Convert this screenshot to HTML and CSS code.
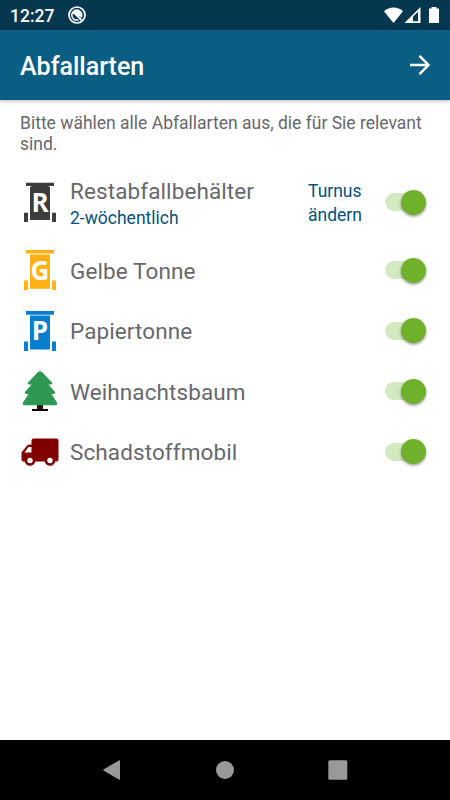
FILE: index.html
```html
<!DOCTYPE html>
<html lang="de">
<head>
    <meta charset="UTF-8">
    <meta name="viewport" content="width=device-width, initial-scale=1.0">
    <title>Abfallarten</title>
    <link rel="stylesheet" href="styles.css">
</head>
<body>
    <div class="status-bar">
        <span class="clock">12:27</span>
        <svg class="status-logo" width="18" height="18" viewBox="0 0 18 18">
            <circle cx="9" cy="9" r="8" fill="none" stroke="#fff" stroke-width="1.7"/>
            <path d="M13.2 11.5A5 5 0 1 0 10.5 13.8" fill="none" stroke="#fff" stroke-width="1.5"/>
            <path d="M5 8a4 4 0 0 1 8 0v3z" fill="#fff"/>
            <path d="M7 8l6.5 6" stroke="#fff" stroke-width="2"/>
            <path d="M5.5 8.5l5 4.5" stroke="#05384f" stroke-width="1"/>
        </svg>
        <svg class="status-icons" width="56" height="18" viewBox="0 0 56 18">
            <path d="M0 5.2C5.5.2 13.5.2 19 5.2L9.5 17z" fill="#fff"/>
            <path fill-rule="evenodd" d="M20.5 17L36.5 1v16zM29 10.8V15.3h5V5.8z" fill="#fff"/>
            <path d="M45 2.6h2.5V1h5v1.600H55V17H45z" fill="#fff"/>
        </svg>
    </div>

    <div class="header">
        <h1>Abfallarten</h1>
        <svg class="next-icon" width="22" height="22" viewBox="0 0 22 22">
            <path d="M1 11h18M10.500 1.800L19.500 11l-9 9.200" fill="none" stroke="#fff" stroke-width="2.500"/>
        </svg>
    </div>

    <div class="content">
        <p class="hint">Bitte wählen alle Abfallarten aus, die für Sie relevant sind.</p>

        <div class="row row-large">
            <svg class="icon bin-black" viewBox="0 0 40 40">
                <path d="M6 .8h28V4H6zM10 5h20v33H10zM4 30.700h4V40H4zM32 30.700h4V40h-4z"/>
                <path d="M11 4h18v1.500H11z"/>
                <text x="20" y="29.500">R</text>
            </svg>
            <div class="label">
                <div class="name">Restabfallbehälter</div>
                <div class="interval">2-wöchentlich</div>
            </div>
            <a class="change">Turnus ändern</a>
            <div class="switch"></div>
        </div>

        <div class="row">
            <svg class="icon bin-yellow" viewBox="0 0 40 40">
                <path d="M6 0h28v3.500H6zM10 4.500h20V38.700H10zM4 30.500h4V40H4zM32 30.500h4V40h-4z"/>
                <text x="20" y="29.500">G</text>
            </svg>
            <div class="label name">Gelbe Tonne</div>
            <div class="switch"></div>
        </div>

        <div class="row">
            <svg class="icon bin-blue" viewBox="0 0 40 40">
                <path d="M6 0h28v3.800H6zM10 4.500h20V38.500H10zM4 30.500h4V40H4zM32 30.500h4V40h-4z"/>
                <text x="20" y="29">P</text>
            </svg>
            <div class="label name">Papiertonne</div>
            <div class="switch"></div>
        </div>

        <div class="row">
            <svg class="icon" viewBox="0 0 40 40">
                <path d="M17 33h6v5h-6z" fill="#301008"/>
                <path d="M12 38h16v2H12z" fill="#080404"/>
                <path d="M17.500 1.500q2.500-2.500 5 0L32 11.500q1 1.500-1 1.900h-2.500L35 21q1 2-1.500 2h-2L37 31.500q1 2.800-2 2.800H5q-3 0-2-2.800L8.500 23h-2Q4 23 5 21l6.500-7.600H9q-2-.4-1-1.900z" fill="#2e9852"/>
            </svg>
            <div class="label name">Weihnachtsbaum</div>
            <div class="switch"></div>
        </div>

        <div class="row">
            <svg class="icon" viewBox="0 0 40 40">
                <path d="M13.500 6.500h23q2 0 2 2v19q0 2-2 2H3.500q-2 0-2-2V20.500L7 13.500q1-1 2-1h2.500v-4q0-2 2-2z" fill="#800000"/>
                <path d="M4.500 20.500l4-5.500h3v5.500z" fill="#fff"/>
                <circle cx="10" cy="28.500" r="4" fill="#fff" stroke="#800000" stroke-width="2.600"/>
                <circle cx="30" cy="28.500" r="4" fill="#fff" stroke="#800000" stroke-width="2.600"/>
            </svg>
            <div class="label name">Schadstoffmobil</div>
            <div class="switch"></div>
        </div>
    </div>

    <div class="nav-bar">
        <svg width="20" height="22" viewBox="0 0 20 22"><path d="M1.800 10.200L17 1.400q1-.5 1 .5v18.200q0 1-1 .5L1.800 11.800q-1.200-.8 0-1.600z"/></svg>
        <svg width="20" height="22" viewBox="0 0 20 22"><circle cx="10" cy="11" r="9"/></svg>
        <svg width="20" height="22" viewBox="0 0 20 22"><rect x=".3" y="1.300" width="19" height="19.400" rx="1.500"/></svg>
    </div>
</body>
</html>
```

FILE: styles.css
```css
* {
    box-sizing: border-box;
}

body {
    margin: 0;
    height: 800px;
    display: flex;
    flex-direction: column;
    background-color: #fff;
    font-family: Roboto, sans-serif;
    color: #67676d;
}

.status-bar {
    height: 30px;
    padding: 0 10px;
    display: flex;
    align-items: center;
    background-color: #05384f;
    color: #fff;
}

.clock {
    width: 58px;
    font-size: 17.5px;
    font-weight: 500;
    padding-top: 2px;
}

.status-icons {
    margin-left: auto;
}

.header {
    height: 69.5px;
    padding: 3px 19px 0 20px;
    display: flex;
    align-items: center;
    justify-content: space-between;
    background-color: #0a5e83;
    color: #fff;
    box-shadow: 0 1px 4px rgba(0, 0, 0, 0.3);
}

.header h1 {
    margin: 0;
    font-size: 25px;
    font-weight: 500;
}

.next-icon {
    margin-bottom: 2px;
}

.content {
    flex: 1;
    padding: 13px 20px 0;
}

.hint {
    margin: 0;
    font-size: 17.5px;
    line-height: 21px;
}

.row {
    height: 60.5px;
    display: flex;
    align-items: center;
}

.row-large {
    height: 76px;
    margin-top: 9.5px;
}

.icon {
    width: 40px;
    height: 40px;
    margin-right: 10px;
}

.icon text {
    font-family: "Open Sans", sans-serif;
    font-size: 26px;
    font-weight: 700;
    text-anchor: middle;
    fill: #fff;
}

.bin-black {
    fill: #3c3c3c;
}

.bin-yellow {
    fill: #ffb013;
}

.bin-blue {
    fill: #087fce;
}

.label {
    flex: 1;
}

.name {
    font-size: 22.5px;
    line-height: 28px;
    letter-spacing: 0.1px;
    padding-top: 1px;
}

.row-large .name {
    padding-top: 4px;
}

.interval {
    font-size: 17.5px;
    line-height: 26px;
    color: #07517c;
}

.change {
    width: 77px;
    padding-top: 1px;
    font-size: 17.5px;
    line-height: 24px;
    color: #07517c;
}

.switch {
    width: 41px;
    height: 18px;
    margin-right: 4px;
    border-radius: 9px;
    background-color: #d3e9c0;
    display: flex;
    align-items: center;
    justify-content: flex-end;
}

.switch::after {
    content: "";
    width: 25px;
    height: 25px;
    border-radius: 50%;
    background-color: #70b12b;
    box-shadow: 0 1.5px 3px rgba(0, 0, 0, 0.4);
}

.nav-bar {
    height: 60px;
    padding: 0 102px;
    display: flex;
    align-items: center;
    justify-content: space-between;
    background-color: #000;
    fill: #999;
}
```
